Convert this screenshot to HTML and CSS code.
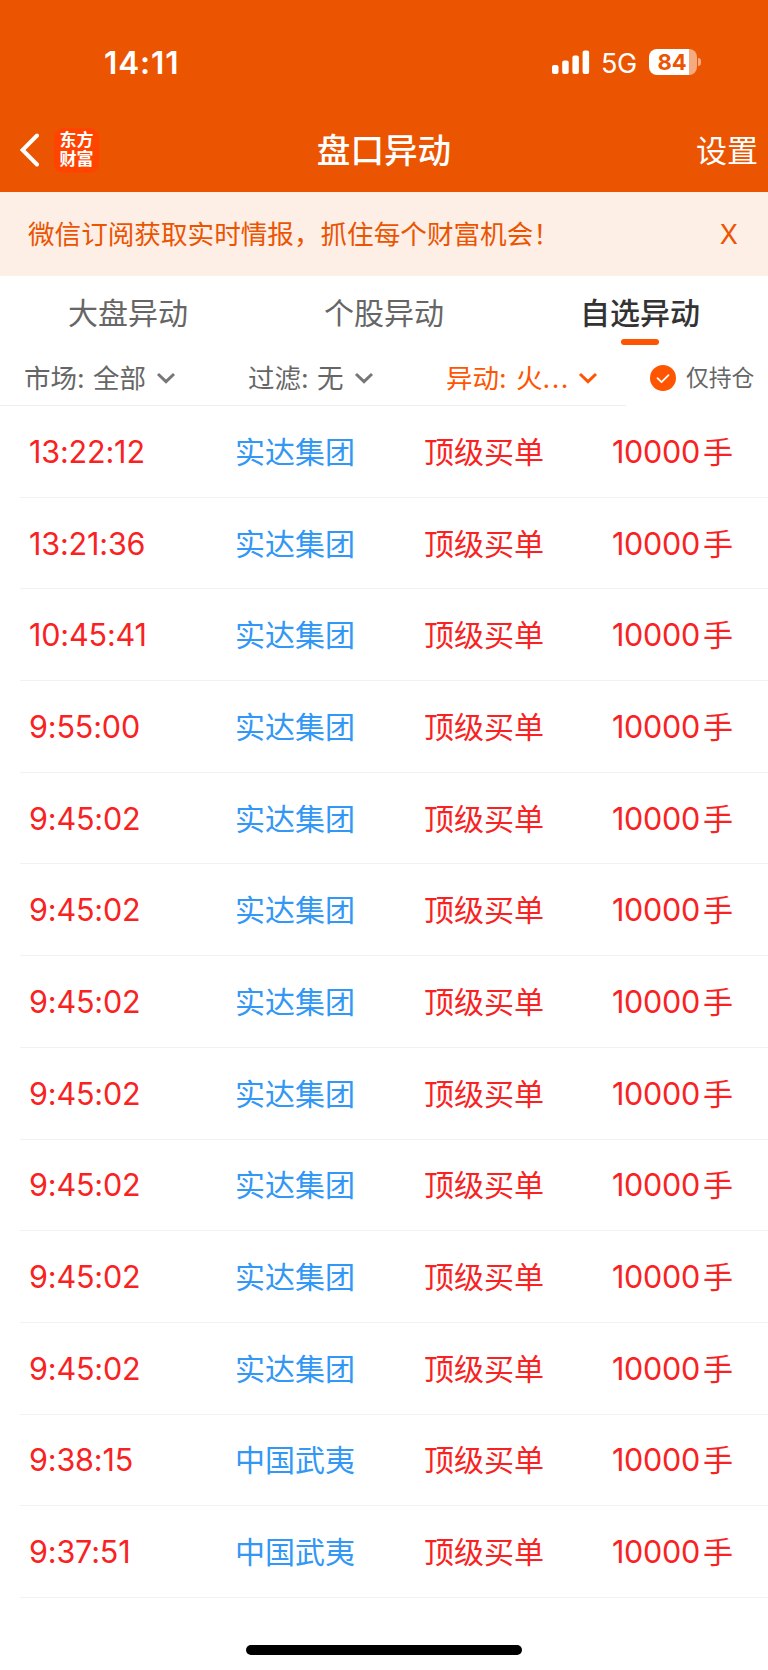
FILE: index.html
```
<!DOCTYPE html>
<html lang="zh-CN">
<head>
  <meta charset="UTF-8" />
  <meta name="viewport" content="width=device-width, initial-scale=1.0"/>
  <title>盘口异动</title>
  <link rel="stylesheet" href="styles.css">
</head>
<body>
  <header class="header">
    <div class="status-bar">
      <span class="clock">14:11</span>
      <div class="status-icons">
        <svg class="signal" width="38" height="24" viewBox="0 0 38 24" fill="#fff">
          <rect x="0" y="15" width="6.5" height="9" rx="2"/>
          <rect x="10.2" y="10.5" width="6.5" height="13.5" rx="2"/>
          <rect x="20.4" y="5.5" width="6.5" height="18.5" rx="2"/>
          <rect x="30.6" y="0.5" width="6.5" height="23.5" rx="2"/>
        </svg>
        <span class="network">5G</span>
        <div class="battery"><span>84</span></div>
        <div class="battery-cap"></div>
      </div>
    </div>
    <nav class="nav-bar">
      <div class="nav-left">
        <svg class="back" width="20" height="34" viewBox="0 0 20 34" fill="none" stroke="#fff" stroke-width="4" stroke-linecap="round" stroke-linejoin="miter">
          <path d="M18 2.5L3.6 17L18 31.5"/>
        </svg>
        <div class="logo"><span>东方</span><span>财富</span></div>
      </div>
      <h1>盘口异动</h1>
      <a class="settings">设置</a>
    </nav>
  </header>

  <div class="notice">
    <p>微信订阅获取实时情报，抓住每个财富机会！</p>
    <span class="close">X</span>
  </div>

  <div class="tabs">
    <div class="tab">大盘异动</div>
    <div class="tab">个股异动</div>
    <div class="tab active">自选异动</div>
  </div>

  <div class="filters">
    <div class="filter-group">
      <div class="filter">
        <span class="label">市场:</span><span>全部</span>
        <svg class="arrow" width="20" height="12" viewBox="0 0 20 12"><path d="M2 2l8 7.6L18 2"/></svg>
      </div>
      <div class="filter">
        <span class="label">过滤:</span><span>无</span>
        <svg class="arrow" width="20" height="12" viewBox="0 0 20 12"><path d="M2 2l8 7.6L18 2"/></svg>
      </div>
      <div class="filter selected">
        <span class="label">异动:</span><span class="value">火<i>...</i></span>
        <svg class="arrow" width="20" height="12" viewBox="0 0 20 12"><path d="M2 2l8 7.6L18 2"/></svg>
      </div>
    </div>
    <div class="hold-only">
      <svg width="26" height="26" viewBox="0 0 26 26" fill="none">
        <circle cx="13" cy="13" r="13" fill="#ff5500"/>
        <path d="M7.5 13.2l4 4 7-7" stroke="#fff" stroke-width="1.8" stroke-linecap="round" stroke-linejoin="round"/>
      </svg>
      <span>仅持仓</span>
    </div>
  </div>

  <ul class="list">
    <li><span class="time">13:22:12</span><span class="name">实达集团</span><span class="type">顶级买单</span><span class="amount"><b>10000</b><span>手</span></span></li>
    <li><span class="time">13:21:36</span><span class="name">实达集团</span><span class="type">顶级买单</span><span class="amount"><b>10000</b><span>手</span></span></li>
    <li><span class="time">10:45:41</span><span class="name">实达集团</span><span class="type">顶级买单</span><span class="amount"><b>10000</b><span>手</span></span></li>
    <li><span class="time">9:55:00</span><span class="name">实达集团</span><span class="type">顶级买单</span><span class="amount"><b>10000</b><span>手</span></span></li>
    <li><span class="time">9:45:02</span><span class="name">实达集团</span><span class="type">顶级买单</span><span class="amount"><b>10000</b><span>手</span></span></li>
    <li><span class="time">9:45:02</span><span class="name">实达集团</span><span class="type">顶级买单</span><span class="amount"><b>10000</b><span>手</span></span></li>
    <li><span class="time">9:45:02</span><span class="name">实达集团</span><span class="type">顶级买单</span><span class="amount"><b>10000</b><span>手</span></span></li>
    <li><span class="time">9:45:02</span><span class="name">实达集团</span><span class="type">顶级买单</span><span class="amount"><b>10000</b><span>手</span></span></li>
    <li><span class="time">9:45:02</span><span class="name">实达集团</span><span class="type">顶级买单</span><span class="amount"><b>10000</b><span>手</span></span></li>
    <li><span class="time">9:45:02</span><span class="name">实达集团</span><span class="type">顶级买单</span><span class="amount"><b>10000</b><span>手</span></span></li>
    <li><span class="time">9:45:02</span><span class="name">实达集团</span><span class="type">顶级买单</span><span class="amount"><b>10000</b><span>手</span></span></li>
    <li><span class="time">9:38:15</span><span class="name">中国武夷</span><span class="type">顶级买单</span><span class="amount"><b>10000</b><span>手</span></span></li>
    <li><span class="time">9:37:51</span><span class="name">中国武夷</span><span class="type">顶级买单</span><span class="amount"><b>10000</b><span>手</span></span></li>
  </ul>

  <div class="home-indicator"></div>
</body>
</html>
```
FILE: styles.css
```
* {
  margin: 0;
  padding: 0;
  box-sizing: border-box;
}

body {
  width: 768px;
  height: 1670px;
  overflow: hidden;
  background-color: #fff;
  color: #666;
  font-family: Inter, 'Noto Sans CJK SC', sans-serif;
}

/* header */
.header {
  height: 192px;
  background-color: #eb5502;
  color: #fff;
}

.status-bar {
  height: 108px;
  padding: 16px 67px 0 104px;
  display: flex;
  align-items: center;
  justify-content: space-between;
}

.clock {
  font-size: 31.5px;
  font-weight: 600;
  letter-spacing: 0.9px;
}

.status-icons {
  display: flex;
  align-items: center;
}

.network {
  width: 48px;
  margin-left: 11px;
  padding-top: 3px;
  font-size: 27px;
  line-height: 26px;
  letter-spacing: -0.5px;
}

.battery {
  width: 48px;
  height: 26px;
  padding-right: 2px;
  border-radius: 8px;
  background: linear-gradient(to right, #fff 40px, #f5aa80 40px);
  color: #eb5502;
  font-size: 22px;
  font-weight: 700;
  line-height: 27px;
  text-align: center;
}

.battery-cap {
  width: 3px;
  height: 8px;
  margin-left: 1px;
  border-radius: 0 3px 3px 0;
  background-color: #f5aa80;
}

.nav-bar {
  height: 84px;
  padding: 0 10px;
  display: grid;
  grid-template-columns: 1fr auto 1fr;
  align-items: center;
}

.nav-left {
  padding-left: 9px;
  display: flex;
  align-items: center;
  gap: 15px;
}

.logo {
  width: 45px;
  height: 45px;
  border-radius: 9px;
  background-color: #ff4400;
  display: flex;
  flex-direction: column;
  align-items: center;
  justify-content: center;
  padding-bottom: 1px;
  font-size: 17px;
  font-weight: 700;
  line-height: 19px;
}

h1 {
  padding-bottom: 4px;
  font-size: 33.6px;
  font-weight: 500;
}

.settings {
  justify-self: end;
  padding-bottom: 4px;
  font-size: 31px;
}

/* notice */
.notice {
  height: 84px;
  padding: 0 30px 0 28px;
  display: flex;
  align-items: center;
  justify-content: space-between;
  background-color: #fdeee6;
  color: #eb5502;
  font-size: 26.6px;
}

.notice p {
  padding-bottom: 3px;
}

/* tabs */
.tabs {
  height: 74px;
  display: grid;
  grid-template-columns: repeat(3, 1fr);
}

.tab {
  display: flex;
  flex-direction: column;
  align-items: center;
  font-size: 30px;
  line-height: 74px;
}

.tab.active {
  color: #333;
  font-weight: 500;
}

.tab.active::after {
  content: '';
  width: 38px;
  height: 6px;
  margin-top: -11px;
  border-radius: 3px;
  background-color: #ff5500;
}

/* filters */
.filters {
  height: 56px;
  display: flex;
  font-size: 26.5px;
}

.filter-group {
  width: 626px;
  padding-left: 24px;
  display: grid;
  grid-template-columns: 224px 198px auto;
  border-bottom: 1px solid #eee;
}

.filter {
  display: flex;
  align-items: center;
}

.filter span {
  padding-bottom: 2px;
}

.label {
  width: 69px;
}

.arrow {
  margin-left: 10px;
  fill: none;
  stroke: #777;
  stroke-width: 3;
}

.selected {
  color: #ff5500;
}

.selected .label {
  width: 70px;
}

.selected .arrow {
  margin-left: 8px;
  stroke: #ff5500;
}

.value i {
  font-style: normal;
  letter-spacing: 1.5px;
}

.hold-only {
  padding-left: 24px;
  display: flex;
  align-items: center;
  gap: 10px;
  font-size: 22.8px;
}

.hold-only span {
  padding-bottom: 3px;
}

/* list */
.list {
  list-style: none;
  padding-left: 20px;
  color: #f82222;
  font-size: 30px;
}

.list li {
  height: 91.7px;
  padding-left: 9px;
  display: grid;
  grid-template-columns: 206px 189px 188px auto;
  align-items: center;
  border-bottom: 1px solid #f2f2f2;
}

.time {
  font-size: 30.5px;
  letter-spacing: -0.15px;
}

.name,
.type,
.amount span {
  padding-bottom: 3px;
}

.name {
  color: #3297f5;
}

.amount {
  display: flex;
  align-items: center;
  gap: 3px;
}

.amount b {
  font-size: 30.5px;
  font-weight: 400;
  letter-spacing: -0.3px;
}

.home-indicator {
  width: 276px;
  height: 10px;
  margin: 47px auto 0;
  border-radius: 5px;
  background-color: #000;
}
```
